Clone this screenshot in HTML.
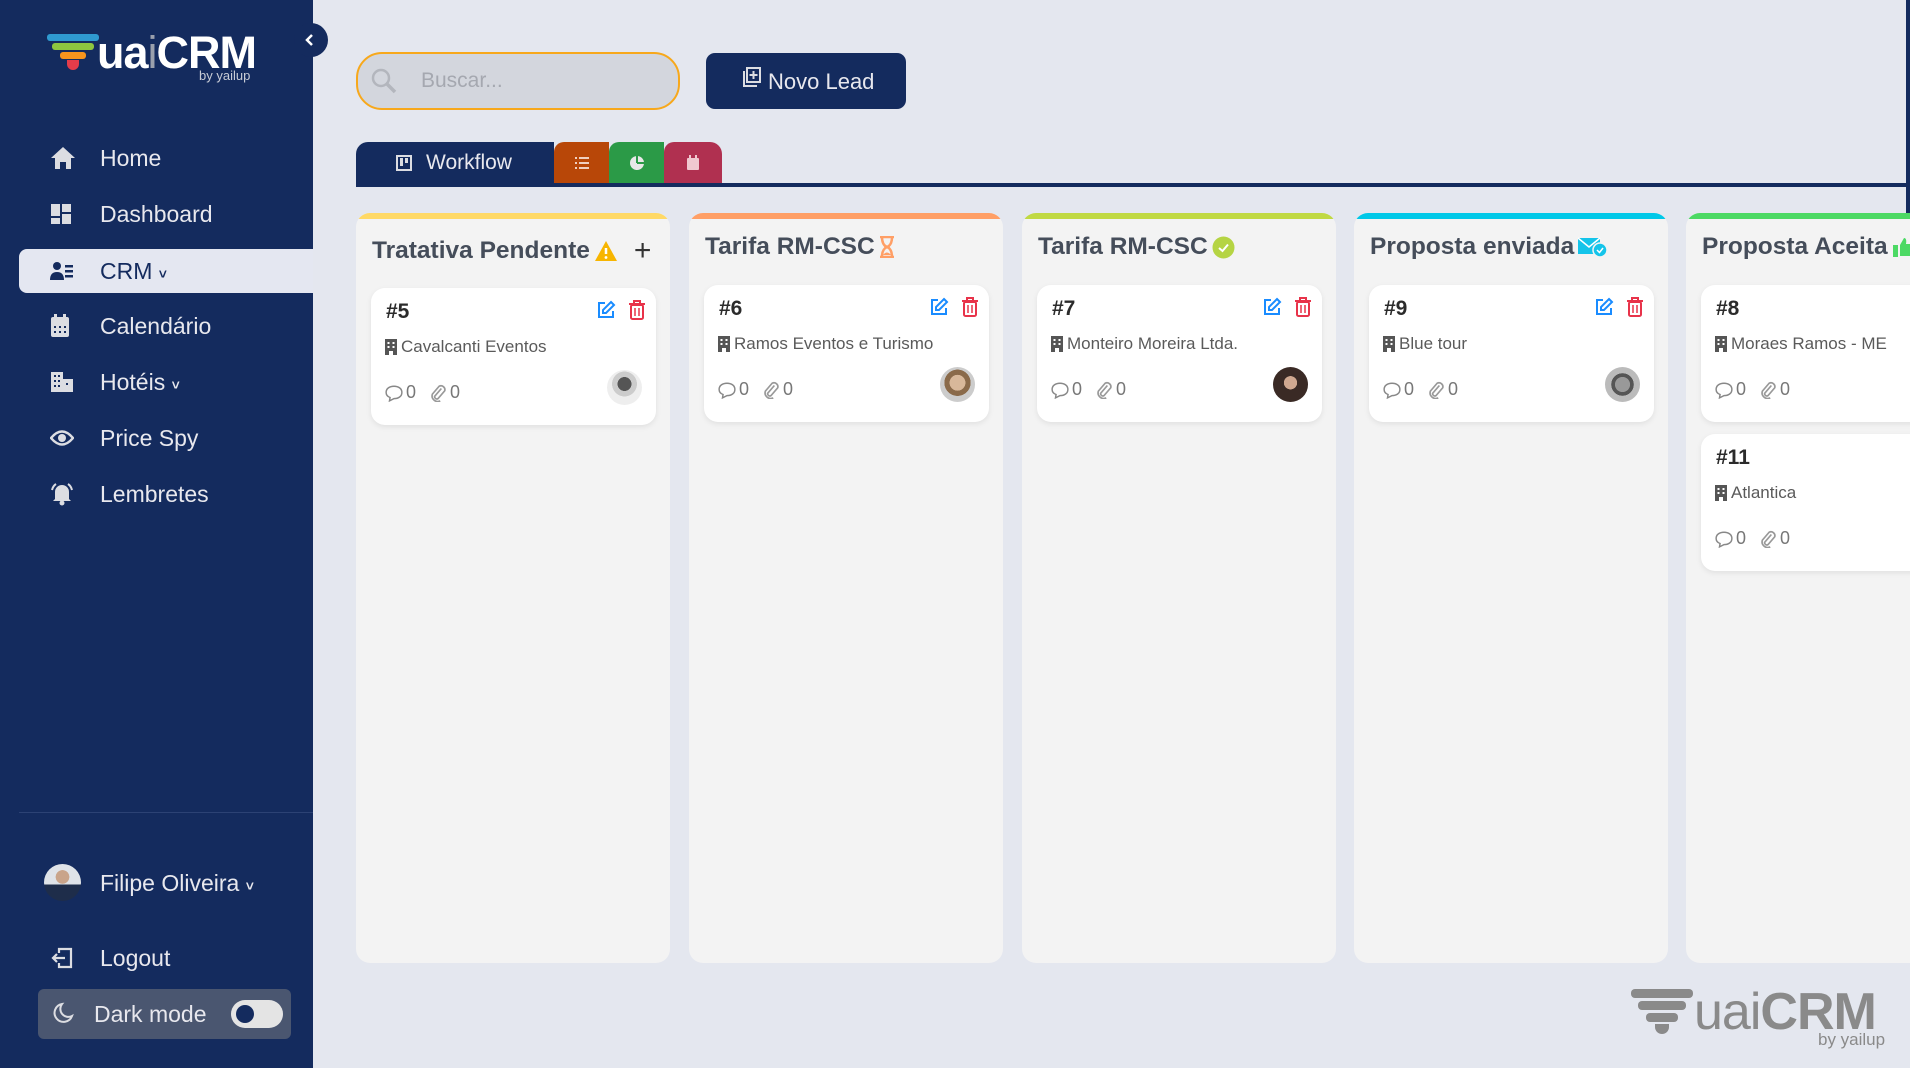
<!DOCTYPE html>
<html><head><meta charset="utf-8"><style>
*{box-sizing:border-box;margin:0;padding:0}
body{width:1910px;height:1068px;overflow:hidden;background:#e4e7ef;font-family:"Liberation Sans",sans-serif;position:relative}
.sb{position:absolute;left:0;top:0;width:313px;height:1068px;background:#142b5e}
.abs{position:absolute}
.nav{position:absolute;left:0;width:313px;height:42px;display:flex;align-items:center;color:#e8e8ee;font-size:23px}
.nav svg{position:absolute;left:50px}
.nav span{position:absolute;left:100px}
.col{position:absolute;top:213px;width:314px;height:750px;background:#f3f3f3;border-radius:14px;overflow:hidden}
.col .bar{height:6px}
.col h3{position:absolute;left:16px;top:20px;font-size:24.5px;font-weight:bold;color:#454d5a;display:flex;align-items:center;gap:4px;white-space:nowrap}
.card{position:absolute;left:15px;width:285px;height:137px;background:#fff;border-radius:14px;box-shadow:0 2px 6px rgba(0,0,0,.08)}
.card .n{position:absolute;left:15px;top:12px;font-size:21px;font-weight:bold;color:#2b2b2b}
.card .co{position:absolute;left:14px;top:49px;font-size:17px;color:#5a5a5a;display:flex;align-items:center;gap:4px;white-space:nowrap}
.card .ft{position:absolute;left:14px;top:94px;font-size:18px;color:#777;display:flex;align-items:center;gap:3px}
.card .av{position:absolute;right:14px;top:82px;width:35px;height:35px;border-radius:50%}
.card .ic{position:absolute;right:10px;top:12px;display:flex;gap:12px}
</style></head><body>
<div class="sb"></div>
<div class="abs" style="left:294px;top:23px;width:34px;height:34px;border-radius:50%;background:#142b5e"></div>
<svg class="abs" style="left:303px;top:32px" width="14" height="16"><path d="M9 3 L4 8 L9 13" stroke="#fff" stroke-width="2.5" fill="none"/></svg>
<svg class="abs" style="left:46px;top:33px" width="56" height="37">
<rect x="1" y="1" width="52" height="7" rx="3" fill="#2f9ad0"/>
<rect x="6" y="10" width="42" height="7" rx="3" fill="#8dc63f"/>
<rect x="14" y="19" width="26" height="7" rx="3" fill="#f7941d"/>
<path d="M21 27 h12 v4 a6 6 0 0 1 -12 0z" fill="#e53c4a"/>
</svg>
<div class="abs" style="left:97px;top:27px;font-size:45px;color:#fff;font-weight:bold;letter-spacing:-1px">ua<span style="color:#9aa0ad;font-weight:normal">i</span>CRM</div>
<div class="abs" style="left:199px;top:68px;font-size:13px;color:#c8ccd6">by yailup</div>
<div class="nav" style="top:137px"><svg width="26" height="24" viewBox="0 0 26 24"><path d="M13 1 L25 12 H21 V23 H16 V16 H10 V23 H5 V12 H1Z" fill="#dcdde2"/></svg><span>Home</span></div>
<div class="nav" style="top:193px"><svg width="22" height="22"><rect x="1" y="1" width="9" height="12" fill="#dcdde2"/><rect x="12" y="1" width="9" height="8" fill="#dcdde2"/><rect x="1" y="15" width="9" height="6" fill="#dcdde2"/><rect x="12" y="11" width="9" height="10" fill="#dcdde2"/></svg><span>Dashboard</span></div>
<div class="abs" style="left:19px;top:249px;width:294px;height:44px;background:#e4e7f1;border-radius:8px 0 0 8px"></div>
<div class="nav" style="top:250px;color:#142b5e"><svg width="24" height="20"><circle cx="7" cy="5" r="4" fill="#142b5e"/><path d="M0 19 q0-8 7-8 q7 0 7 8z" fill="#142b5e"/><rect x="15" y="4" width="8" height="2.5" fill="#142b5e"/><rect x="15" y="9" width="8" height="2.5" fill="#142b5e"/><rect x="15" y="14" width="8" height="2.5" fill="#142b5e"/></svg><span>CRM <b style="font-size:14px">&#709;</b></span></div>
<div class="nav" style="top:305px"><svg width="20" height="24"><rect x="1" y="3" width="18" height="20" rx="2" fill="#dcdde2"/><rect x="4" y="0" width="3" height="5" fill="#dcdde2"/><rect x="13" y="0" width="3" height="5" fill="#dcdde2"/><g fill="#142b5e"><rect x="4" y="12" width="2" height="2"/><rect x="9" y="12" width="2" height="2"/><rect x="14" y="12" width="2" height="2"/><rect x="4" y="17" width="2" height="2"/><rect x="9" y="17" width="2" height="2"/><rect x="14" y="17" width="2" height="2"/></g></svg><span>Calendário</span></div>
<div class="nav" style="top:361px"><svg width="24" height="22"><path d="M1 1 H13 V8 H23 V21 H1Z" fill="#dcdde2"/><g fill="#142b5e"><rect x="4" y="4" width="2" height="2"/><rect x="8" y="4" width="2" height="2"/><rect x="4" y="9" width="2" height="2"/><rect x="8" y="9" width="2" height="2"/><rect x="4" y="14" width="2" height="2"/><rect x="8" y="14" width="2" height="2"/><rect x="16" y="12" width="2" height="2"/></g></svg><span>Hotéis <b style="font-size:14px">&#709;</b></span></div>
<div class="nav" style="top:417px"><svg width="24" height="18"><path d="M1 9 Q12 -4 23 9 Q12 22 1 9Z" fill="none" stroke="#dcdde2" stroke-width="2.5"/><circle cx="12" cy="9" r="4" fill="#dcdde2"/></svg><span>Price Spy</span></div>
<div class="nav" style="top:473px"><svg width="24" height="24"><path d="M5 17 V10 a7 7 0 0 1 14 0 V17 L21 19 H3Z" fill="#dcdde2"/><circle cx="12" cy="21" r="2.5" fill="#dcdde2"/><path d="M2 8 Q3 4 6 2 M22 8 Q21 4 18 2" stroke="#dcdde2" stroke-width="2" fill="none"/></svg><span>Lembretes</span></div>
<div class="abs" style="left:19px;top:812px;width:294px;height:1px;background:#2c4274"></div>
<div class="abs" style="left:44px;top:864px;width:37px;height:37px;border-radius:50%;background:radial-gradient(circle at 50% 35%,#c9a48a 0 22%,transparent 23%),linear-gradient(#dfe3e8 55%,#1e2d4a 56%)"></div>
<div class="abs" style="left:100px;top:870px;font-size:23px;color:#e8e8ee">Filipe Oliveira <b style="font-size:14px">&#709;</b></div>
<svg class="abs" style="left:51px;top:947px" width="22" height="22"><path d="M8 6 V2 H20 V20 H8 V16" stroke="#dcdde2" stroke-width="2.2" fill="none"/><path d="M14 11 H2 M6 7 L2 11 L6 15" stroke="#dcdde2" stroke-width="2.2" fill="none"/></svg>
<div class="abs" style="left:100px;top:945px;font-size:23px;color:#e8e8ee">Logout</div>
<div class="abs" style="left:38px;top:989px;width:253px;height:50px;background:#4a5670;border-radius:6px"></div>
<svg class="abs" style="left:52px;top:1002px" width="22" height="22"><path d="M10 2 A9 9 0 1 0 20 14 A8 8 0 0 1 10 2Z" stroke="#dcdde2" stroke-width="2" fill="none"/></svg>
<div class="abs" style="left:94px;top:1001px;font-size:23px;color:#e8e8ee">Dark mode</div>
<div class="abs" style="left:231px;top:1000px;width:52px;height:28px;border-radius:14px;background:#e4e4e4"></div>
<div class="abs" style="left:236px;top:1005px;width:18px;height:18px;border-radius:50%;background:#142b5e"></div>
<div class="abs" style="left:356px;top:52px;width:324px;height:58px;border:2.5px solid #f7a81b;border-radius:26px;background:#d3d6dd"></div>
<svg class="abs" style="left:370px;top:67px" width="28" height="28"><circle cx="11" cy="11" r="8" stroke="#b3b6bd" stroke-width="2.5" fill="none"/><path d="M17 17 L25 25" stroke="#b3b6bd" stroke-width="3.5"/></svg>
<div class="abs" style="left:421px;top:69px;font-size:21px;color:#a5a8b0">Buscar...</div>
<div class="abs" style="left:706px;top:53px;width:200px;height:56px;background:#142b5e;border-radius:9px"></div>
<svg class="abs" style="left:740px;top:66px" width="22" height="22"><path d="M4 5 V20 H17" stroke="#dcdde2" stroke-width="2" fill="none"/><rect x="7" y="2" width="13" height="14" stroke="#dcdde2" stroke-width="2" fill="none"/><path d="M13.5 5 V13 M9.5 9 H17.5" stroke="#dcdde2" stroke-width="2"/></svg>
<div class="abs" style="left:768px;top:69px;font-size:22px;color:#e8e8ee">Novo Lead</div>
<div class="abs" style="left:356px;top:142px;width:366px;height:42px;border-radius:12px 12px 0 0;overflow:hidden;display:flex">
<div style="width:198px;background:#142b5e;display:flex;align-items:center;padding-left:40px;color:#e8e8ee;font-size:21px"><svg width="16" height="16" style="margin-right:14px"><rect x="1" y="1" width="14" height="14" stroke="#dcdde2" stroke-width="2" fill="none"/><rect x="4" y="3" width="3" height="8" fill="#dcdde2"/><rect x="9" y="3" width="3" height="5" fill="#dcdde2"/></svg>Workflow</div>
<div style="width:55px;background:#b84708;border-radius:10px 0 0 0;display:flex;align-items:center;justify-content:center"><svg width="14" height="14"><g fill="#f0d0c0"><rect x="0" y="1" width="2" height="2"/><rect x="4" y="1" width="10" height="2"/><rect x="0" y="6" width="2" height="2"/><rect x="4" y="6" width="10" height="2"/><rect x="0" y="11" width="2" height="2"/><rect x="4" y="11" width="10" height="2"/></g></svg></div>
<div style="width:55px;background:#2b9a47;border-radius:10px 0 0 0;display:flex;align-items:center;justify-content:center"><svg width="16" height="16"><circle cx="8" cy="8" r="7" fill="#e8e8e8"/><path d="M8 8 V1 M8 8 H15" stroke="#2b9a47" stroke-width="2"/></svg></div>
<div style="width:58px;background:#b03050;border-radius:10px 0 0 0;display:flex;align-items:center;justify-content:center"><svg width="14" height="16"><rect x="1" y="3" width="12" height="12" rx="1" fill="#f0c8d0"/><rect x="3" y="0" width="2" height="4" fill="#f0c8d0"/><rect x="9" y="0" width="2" height="4" fill="#f0c8d0"/></svg></div>
</div>
<div class="abs" style="left:356px;top:183px;width:1554px;height:4px;background:#142b5e"></div>
<div class="abs" style="left:1906px;top:0;width:4px;height:963px;background:#142b5e"></div>

<svg width="0" height="0" style="position:absolute"><defs>
<symbol id="ed" viewBox="0 0 20 20"><path d="M9 3 H3 V17 H17 V11" stroke="#1a8cff" stroke-width="2" fill="none"/><path d="M15 2 L18 5 L10 13 L7 13 L7 10Z" stroke="#1a8cff" stroke-width="2" fill="none"/></symbol>
<symbol id="tr" viewBox="0 0 18 20"><path d="M1 4 H17 M6 4 V1 H12 V4" stroke="#e8334a" stroke-width="2" fill="none"/><rect x="3" y="5" width="12" height="14" rx="1.5" stroke="#e8334a" stroke-width="2" fill="none"/><path d="M7 8 V16 M11 8 V16" stroke="#e8334a" stroke-width="1.5"/></symbol>
<symbol id="bd" viewBox="0 0 12 16"><path d="M0 0 H12 V16 H8 V12 H4 V16 H0Z" fill="#555"/><g fill="#fff"><rect x="2.5" y="3" width="2" height="2"/><rect x="7.5" y="3" width="2" height="2"/><rect x="2.5" y="7" width="2" height="2"/><rect x="7.5" y="7" width="2" height="2"/></g></symbol>
<symbol id="cm" viewBox="0 0 16 16"><path d="M8 2 C12 2 15 4 15 7.5 C15 11 12 13 8 13 L4 15 L4.5 12 C2 11 1 9.5 1 7.5 C1 4 4 2 8 2Z" stroke="#888" stroke-width="1.3" fill="none"/></symbol>
<symbol id="cl" viewBox="0 0 16 16"><path d="M11 4 L5 11 A2 2 0 0 0 8 13 L14 6 A3.5 3.5 0 0 0 9 2 L3 9 A5 5 0 0 0 10 15" stroke="#999" stroke-width="1.5" fill="none"/></symbol>
</defs></svg>

<div class="col" style="left:356px"><div class="bar" style="background:#ffd966"></div>
<h3 style="top:21px">Tratativa Pendente <svg width="24" height="22"><path d="M12 1 L23 21 H1Z" fill="#f7b500"/><path d="M12 8 V14" stroke="#fff" stroke-width="2.5"/><circle cx="12" cy="17.5" r="1.4" fill="#fff"/></svg><span style="margin-left:12px;font-size:30px;font-weight:normal;color:#333">+</span></h3>
<div class="card" style="top:75px"><div class="n">#5</div>
<div class="ic"><svg width="20" height="20"><use href="#ed"/></svg><svg width="18" height="20"><use href="#tr"/></svg></div>
<div class="co"><svg width="12" height="16"><use href="#bd"/></svg>Cavalcanti Eventos</div>
<div class="ft"><svg width="18" height="18"><use href="#cm"/></svg>0&nbsp;&nbsp;<svg width="18" height="18"><use href="#cl"/></svg>0</div>
<div class="av" style="background:radial-gradient(circle at 50% 40%,#555 0 25%,#ccc 26% 45%,#eee 46%)"></div></div>
</div>
<div class="col" style="left:689px"><div class="bar" style="background:#ff9f66"></div><h3>Tarifa RM-CSC <svg width="16" height="22"><path d="M1 1 H15 M1 21 H15 M3 1 Q3 9 8 11 Q3 13 3 21 M13 1 Q13 9 8 11 Q13 13 13 21" stroke="#ff9f66" stroke-width="2.5" fill="none"/><path d="M4 19 Q8 14 12 19Z" fill="#ff9f66"/></svg></h3>
<div class="card" style="top:72px"><div class="n">#6</div>
<div class="ic"><svg width="20" height="20"><use href="#ed"/></svg><svg width="18" height="20"><use href="#tr"/></svg></div>
<div class="co"><svg width="12" height="16"><use href="#bd"/></svg>Ramos Eventos e Turismo</div>
<div class="ft"><svg width="18" height="18"><use href="#cm"/></svg>0&nbsp;&nbsp;<svg width="18" height="18"><use href="#cl"/></svg>0</div>
<div class="av" style="background:radial-gradient(circle at 50% 45%,#d8b89a 0 30%,#8a6a4a 31% 50%,#ccc 51%)"></div></div></div>
<div class="col" style="left:1022px"><div class="bar" style="background:#c0d943"></div><h3>Tarifa RM-CSC <svg width="23" height="23"><circle cx="11.5" cy="11.5" r="11" fill="#b5d443"/><path d="M7 12 L10.5 15 L16 8.5" stroke="#fff" stroke-width="2" fill="none"/></svg></h3>
<div class="card" style="top:72px"><div class="n">#7</div>
<div class="ic"><svg width="20" height="20"><use href="#ed"/></svg><svg width="18" height="20"><use href="#tr"/></svg></div>
<div class="co"><svg width="12" height="16"><use href="#bd"/></svg>Monteiro Moreira Ltda.</div>
<div class="ft"><svg width="18" height="18"><use href="#cm"/></svg>0&nbsp;&nbsp;<svg width="18" height="18"><use href="#cl"/></svg>0</div>
<div class="av" style="background:radial-gradient(circle at 50% 45%,#d0a890 0 25%,#3a2a25 26%)"></div></div></div>
<div class="col" style="left:1354px"><div class="bar" style="background:#00c8e8"></div><h3>Proposta enviada <svg width="30" height="22"><rect x="0" y="2" width="22" height="16" fill="#14c4ea"/><path d="M0 2 L11 11 L22 2" stroke="#fff" stroke-width="1.5" fill="none"/><circle cx="22" cy="14" r="7" fill="#14c4ea" stroke="#f3f3f3" stroke-width="1.5"/><path d="M19 14 L21.5 16.5 L25 12" stroke="#fff" stroke-width="1.5" fill="none"/></svg></h3>
<div class="card" style="top:72px"><div class="n">#9</div>
<div class="ic"><svg width="20" height="20"><use href="#ed"/></svg><svg width="18" height="20"><use href="#tr"/></svg></div>
<div class="co"><svg width="12" height="16"><use href="#bd"/></svg>Blue tour</div>
<div class="ft"><svg width="18" height="18"><use href="#cm"/></svg>0&nbsp;&nbsp;<svg width="18" height="18"><use href="#cl"/></svg>0</div>
<div class="av" style="background:radial-gradient(circle at 50% 50%,#999 0 30%,#555 31% 45%,#bbb 46%)"></div></div></div>
<div class="col" style="left:1686px;width:240px"><div class="bar" style="background:#4cd964"></div><h3>Proposta Aceita <svg width="22" height="22"><path d="M1 9 H6 V21 H1Z M8 9 L12 2 Q15 2 14 8 H20 Q22 9 21 12 L19 20 H8Z" fill="#4cd964"/></svg></h3>
<div class="card" style="top:72px;width:260px"><div class="n">#8</div>
<div class="co"><svg width="12" height="16"><use href="#bd"/></svg>Moraes Ramos - ME</div>
<div class="ft"><svg width="18" height="18"><use href="#cm"/></svg>0&nbsp;&nbsp;<svg width="18" height="18"><use href="#cl"/></svg>0</div></div>
<div class="card" style="top:221px;width:260px"><div class="n">#11</div>
<div class="co"><svg width="12" height="16"><use href="#bd"/></svg>Atlantica</div>
<div class="ft"><svg width="18" height="18"><use href="#cm"/></svg>0&nbsp;&nbsp;<svg width="18" height="18"><use href="#cl"/></svg>0</div></div></div>

<svg class="abs" style="left:1630px;top:988px" width="66" height="50">
<rect x="1" y="1" width="62" height="9" rx="4" fill="#8a8a8a"/>
<rect x="8" y="13" width="48" height="9" rx="4" fill="#8a8a8a"/>
<rect x="16" y="25" width="32" height="9" rx="4" fill="#8a8a8a"/>
<path d="M25 36 h14 v3 a7 7 0 0 1 -14 0z" fill="#8a8a8a"/>
</svg>
<div class="abs" style="left:1694px;top:982px;font-size:52px;color:#8a8a8a;font-weight:bold;letter-spacing:-1px"><span style="font-weight:normal">uai</span>CRM</div>
<div class="abs" style="left:1818px;top:1030px;font-size:17px;color:#8a8a8a">by yailup</div>
</body></html>
